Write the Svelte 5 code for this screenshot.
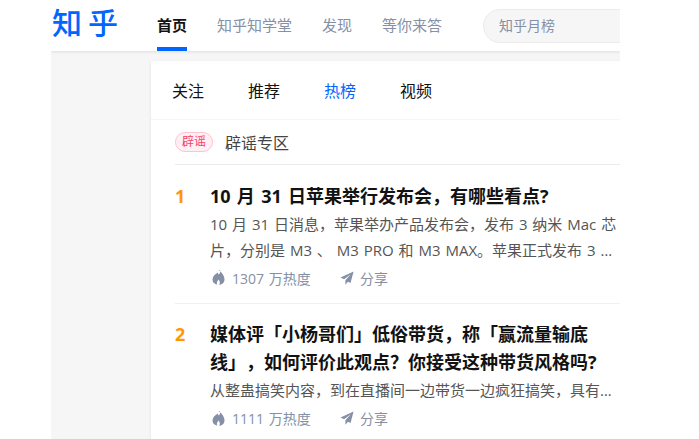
<script>
  const navs = ['首页', '知乎知学堂', '发现', '等你来答'];
  const tabs = ['关注', '推荐', '热榜', '视频'];
  const items = [
    {
      title: '10 月 31 日苹果举行发布会，有哪些看点?',
      text: '10 月 31 日消息，苹果举办产品发布会，发布 3 纳米 Mac 芯片，分别是 M3 、 M3 PRO 和 M3 MAX。苹果正式发布 3 纳米芯片，性能大幅提升，同时更新了多款产品。',
      heat: '1307 万热度'
    },
    {
      title: '媒体评「小杨哥们」低俗带货，称「赢流量输底线」，如何评价此观点？你接受这种带货风格吗?',
      text: '从整蛊搞笑内容，到在直播间一边带货一边疯狂搞笑，具有很强的娱乐性，吸引了大量的观众，也带来了很多争议和讨论。',
      heat: '1111 万热度'
    }
  ];
</script>

<div class="page">
  <header>
    <div class="logo">知乎</div>
    <nav>
      {#each navs as nav, i}
        <span class="nav-item" class:active={i === 0}>{nav}</span>
      {/each}
    </nav>
    <div class="search">知乎月榜</div>
  </header>

  <main>
    <section class="card">
      <div class="tabs">
        {#each tabs as tab, i}
          <span class:current={i === 2}>{tab}</span>
        {/each}
      </div>

      <div class="body">
        <div class="rumor">
          <span class="tag">辟谣</span>
          <span>辟谣专区</span>
        </div>

        {#each items as item, i}
          <article>
            <div class="rank">{i + 1}</div>
            <div class="content">
              <h2>{item.title}</h2>
              <p class:two={i === 0}>{item.text}</p>
              <div class="meta">
                <span class="meta-item heat">
                  <svg width="15" height="15" viewBox="0 0 15 15">
                    <path d="M8 0.3c0.6 2 -0.2 3.2 -1.2 4.2C6.3 3.9 6 3.2 5.8 2.4C2.9 4 0.5 6.6 0.5 9.6c0 2.8 2 4.7 4.9 5.2c-0.5 -0.8 -0.7 -1.6 -0.5 -2.4c0.2 -0.9 1 -1.6 1.7 -2.8c0.6 0.9 1.2 1.8 1.2 2.9c0 0.9 -0.2 1.6 -0.6 2.3c3 -0.4 5.3 -2.5 5.3 -5.4c0 -3.7 -2.7 -6.9 -6 -9.1z" fill="#8590a6" />
                  </svg>
                  {item.heat}
                </span>
                <span class="meta-item">
                  <svg width="14" height="14" viewBox="0 0 14 14">
                    <path d="M13.6 0.4L0.5 6.6l3.6 1.7l6.7 -5L5.4 9.3v4.4l2.5 -2.9l2.6 1.2z" fill="#8590a6" />
                  </svg>
                  分享
                </span>
              </div>
            </div>
          </article>
        {/each}
      </div>
    </section>
  </main>
</div>

<style>
  :global(body) {
    background: #fff;
    overflow: hidden;
  }

  .page {
    width: 569px;
    height: 439px;
    margin-left: 51px;
    overflow: hidden;
    font-family: "Open Sans", "Noto Sans CJK SC", sans-serif;
    text-spacing-trim: space-all;
    background: #f6f6f6;
  }

  header {
    display: flex;
    align-items: center;
    height: 51px;
    background: #fff;
    box-shadow: 0 1px 3px rgba(18, 18, 18, 0.1);
    position: relative;
  }

  .logo {
    width: 106px;
    padding-left: 1px;
    flex: none;
    align-self: flex-start;
    font-size: 30px;
    font-weight: 500;
    letter-spacing: 6px;
    line-height: 46px;
    color: #0066ff;
    box-sizing: border-box;
  }

  nav {
    display: flex;
    gap: 30px;
    height: 51px;
    flex: none;
  }

  .nav-item {
    box-sizing: border-box;
    height: 51px;
    line-height: 50px;
    font-size: 15px;
    color: #8590a6;
    white-space: nowrap;
  }

  .nav-item.active {
    color: #121212;
    font-weight: 700;
    border-bottom: 4px solid #0066ff;
  }

  .search {
    box-sizing: border-box;
    flex: none;
    width: 300px;
    height: 34px;
    margin-left: 41px;
    padding-left: 15px;
    line-height: 32px;
    font-size: 14px;
    color: #8590a6;
    background: #f6f6f6;
    border: 1px solid #ebebeb;
    border-radius: 17px;
  }

  main {
    padding: 10px 0 0 100px;
  }

  .card {
    width: 500px;
    background: #fff;
    border-radius: 2px 0 0 0;
    box-shadow: 0 1px 3px rgba(18, 18, 18, 0.1);
  }

  .tabs {
    display: flex;
    gap: 44px;
    height: 58px;
    padding-left: 21px;
    align-items: center;
    font-size: 16px;
    color: #121212;
    border-bottom: 1px solid #f6f6f6;
  }

  .tabs .current {
    color: #0066ff;
  }

  .body {
    padding-left: 24px;
  }

  .rumor {
    display: flex;
    align-items: center;
    gap: 12px;
    height: 44px;
    font-size: 16px;
    color: #444;
    border-bottom: 1px solid #ebebeb;
  }

  .tag {
    box-sizing: border-box;
    width: 38px;
    height: 20px;
    line-height: 18px;
    text-align: center;
    font-size: 12px;
    color: #f5436a;
    background: #fff0f3;
    border: 1px solid #ffc2cf;
    border-radius: 10px;
  }

  article {
    display: flex;
    padding: 16.5px 0 10px;
    border-bottom: 1px solid #f0f0f0;
  }

  .rank {
    flex: none;
    width: 35px;
    font-size: 18px;
    font-weight: 700;
    line-height: 28px;
    color: #ff9607;
  }

  .content {
    width: 408px;
  }

  h2 {
    margin: 0 0 1px;
    font-size: 18px;
    font-weight: 700;
    line-height: 28px;
    word-spacing: 1.6px;
    color: #121212;
  }

  p {
    margin: 0;
    font-size: 15px;
    line-height: 26px;
    word-spacing: 1px;
    color: #555;
    display: -webkit-box;
    -webkit-box-orient: vertical;
    -webkit-line-clamp: 1;
    overflow: hidden;
  }

  p.two {
    -webkit-line-clamp: 2;
  }

  .meta {
    display: flex;
    height: 30px;
    align-items: center;
    font-size: 14px;
    word-spacing: 1px;
    color: #8590a6;
  }

  .meta-item {
    display: flex;
    align-items: center;
    gap: 6px;
  }

  .heat {
    box-sizing: border-box;
    width: 130px;
    padding-left: 2px;
    gap: 5px;
  }
</style>
